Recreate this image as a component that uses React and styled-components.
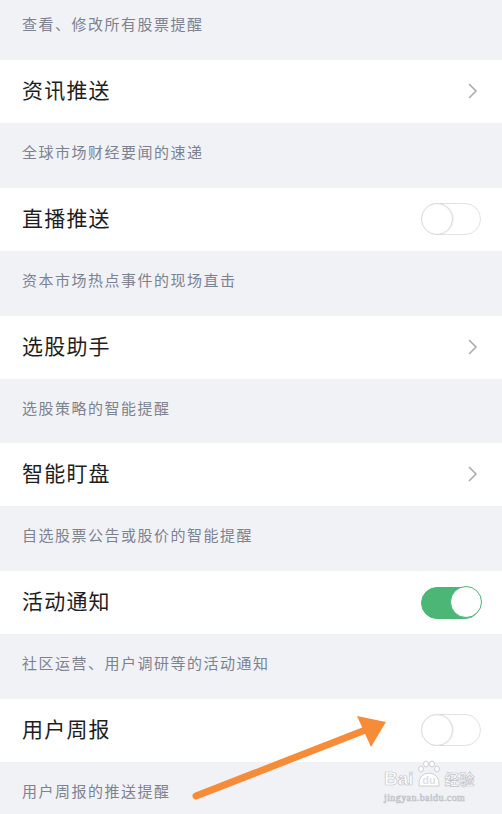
import React from 'react';
import styled, { createGlobalStyle } from 'styled-components';

const GlobalStyle = createGlobalStyle`
  html, body {
    margin: 0;
    padding: 0;
    background: #f1f2f6;
  }
  body {
    font-family: "Noto Sans CJK SC", "Noto Sans", sans-serif;
    overflow: hidden;
  }
`;

const Page = styled.div`
  position: relative;
  width: 502px;
  height: 814px;
  overflow: hidden;
  background: #f1f2f6;
`;

const Desc = styled.div`
  height: ${(p) => p.$h || 64.8}px;
  box-sizing: border-box;
  padding: ${(p) => p.$top || 17}px 22px 0;
  font-size: 15px;
  letter-spacing: 1.5px;
  line-height: 24px;
  color: #7d8290;
  background: #f1f2f6;
`;

const Item = styled.div`
  height: 63px;
  box-sizing: border-box;
  display: flex;
  align-items: center;
  justify-content: space-between;
  padding: 0 21px 0 22px;
  background: #fff;
`;

const Title = styled.span`
  font-size: 21px;
  letter-spacing: 1.2px;
  line-height: 28px;
  margin-top: -5px;
  color: #1e1e1e;
`;

const ChevronIcon = styled.svg`
  margin-right: 2px;
  margin-top: -1px;
`;

const Chevron = () => (
  <ChevronIcon width="12" height="18" viewBox="0 0 12 18">
    <path d="M2 2 L9 9 L2 16" fill="none" stroke="#a9a9a9" strokeWidth="1.5" />
  </ChevronIcon>
);

const Track = styled.div`
  position: relative;
  width: 60px;
  height: 32px;
  box-sizing: border-box;
  border-radius: 16px;
  background: ${(p) => (p.$on ? '#4cb677' : '#fff')};
  border: 1.5px solid ${(p) => (p.$on ? '#4cb677' : '#e2e2e2')};
`;

const Knob = styled.div`
  position: absolute;
  top: -1.5px;
  left: ${(p) => (p.$on ? '28px' : '-1.5px')};
  width: 32px;
  height: 32px;
  box-sizing: border-box;
  border-radius: 50%;
  background: #fff;
  border: 1.5px solid ${(p) => (p.$on ? '#4cb677' : '#dcdcdc')};
  box-shadow: ${(p) => (p.$on ? 'none' : '1px 0 1px rgba(0,0,0,0.06)')};
`;

const Switch = ({ on }) => (
  <Track $on={on}>
    <Knob $on={on} />
  </Track>
);

const Arrow = styled.svg`
  position: absolute;
  left: 0;
  top: 0;
  pointer-events: none;
`;

const Watermark = styled.div`
  position: absolute;
  left: 384px;
  top: 760px;
  color: #fff;
  -webkit-text-stroke: 0.7px rgba(185, 188, 196, 0.9);
  font-family: "Liberation Sans", "Noto Sans CJK SC", sans-serif;
`;

const MarkTop = styled.div`
  display: flex;
  align-items: flex-end;
  font-size: 19px;
  font-weight: 700;
  line-height: 18px;
`;

const MarkCn = styled.span`
  font-size: 15px;
  font-weight: 700;
  line-height: 18px;
  margin-left: 2px;
  font-family: "Noto Sans CJK SC", sans-serif;
`;

const MarkUrl = styled.div`
  font-size: 10px;
  letter-spacing: 0.4px;
  margin-top: 4px;
  font-family: "Liberation Serif", serif;
`;

const PawIcon = styled.svg`
  margin: 0 1px 0 2px;
`;

const Paw = () => (
  <PawIcon width="26" height="28" viewBox="0 0 26 28">
    <g fill="#fff" stroke="rgba(185,188,196,0.9)" strokeWidth="0.8">
      <ellipse cx="5" cy="9" rx="2.4" ry="3" />
      <ellipse cx="10" cy="4" rx="2.4" ry="3" />
      <ellipse cx="16" cy="4" rx="2.4" ry="3" />
      <ellipse cx="21" cy="9" rx="2.4" ry="3" />
      <path d="M3 26 Q2 14 13 13 Q24 14 23 26 Z" />
    </g>
    <text x="13" y="24" textAnchor="middle" fontSize="11" fontWeight="700" fill="#dfe1e6" stroke="none" fontFamily="Liberation Sans, sans-serif">du</text>
  </PawIcon>
);

const rows = [
  { title: '资讯推送', kind: 'chevron', desc: '全球市场财经要闻的速递' },
  { title: '直播推送', kind: 'off', desc: '资本市场热点事件的现场直击' },
  { title: '选股助手', kind: 'chevron', desc: '选股策略的智能提醒' },
  { title: '智能盯盘', kind: 'chevron', desc: '自选股票公告或股价的智能提醒' },
  { title: '活动通知', kind: 'on', desc: '社区运营、用户调研等的活动通知' },
  { title: '用户周报', kind: 'off', desc: '用户周报的推送提醒' },
];

export default function App() {
  return (
    <Page>
      <GlobalStyle />
      <Desc $h={60} $top={12}>查看、修改所有股票提醒</Desc>
      {rows.map((r) => (
        <React.Fragment key={r.title}>
          <Item>
            <Title>{r.title}</Title>
            {r.kind === 'chevron' ? <Chevron /> : <Switch on={r.kind === 'on'} />}
          </Item>
          <Desc>{r.desc}</Desc>
        </React.Fragment>
      ))}
      <Arrow width="502" height="814">
        <line x1="196" y1="796" x2="368" y2="729" stroke="#f68b38" strokeWidth="7" strokeLinecap="round" />
        <polygon points="386,722 357,716 371,747" fill="#f68b38" />
      </Arrow>
      <Watermark>
        <MarkTop>
          Bai
          <Paw />
          <MarkCn>经验</MarkCn>
        </MarkTop>
        <MarkUrl>jingyan.baidu.com</MarkUrl>
      </Watermark>
    </Page>
  );
}
